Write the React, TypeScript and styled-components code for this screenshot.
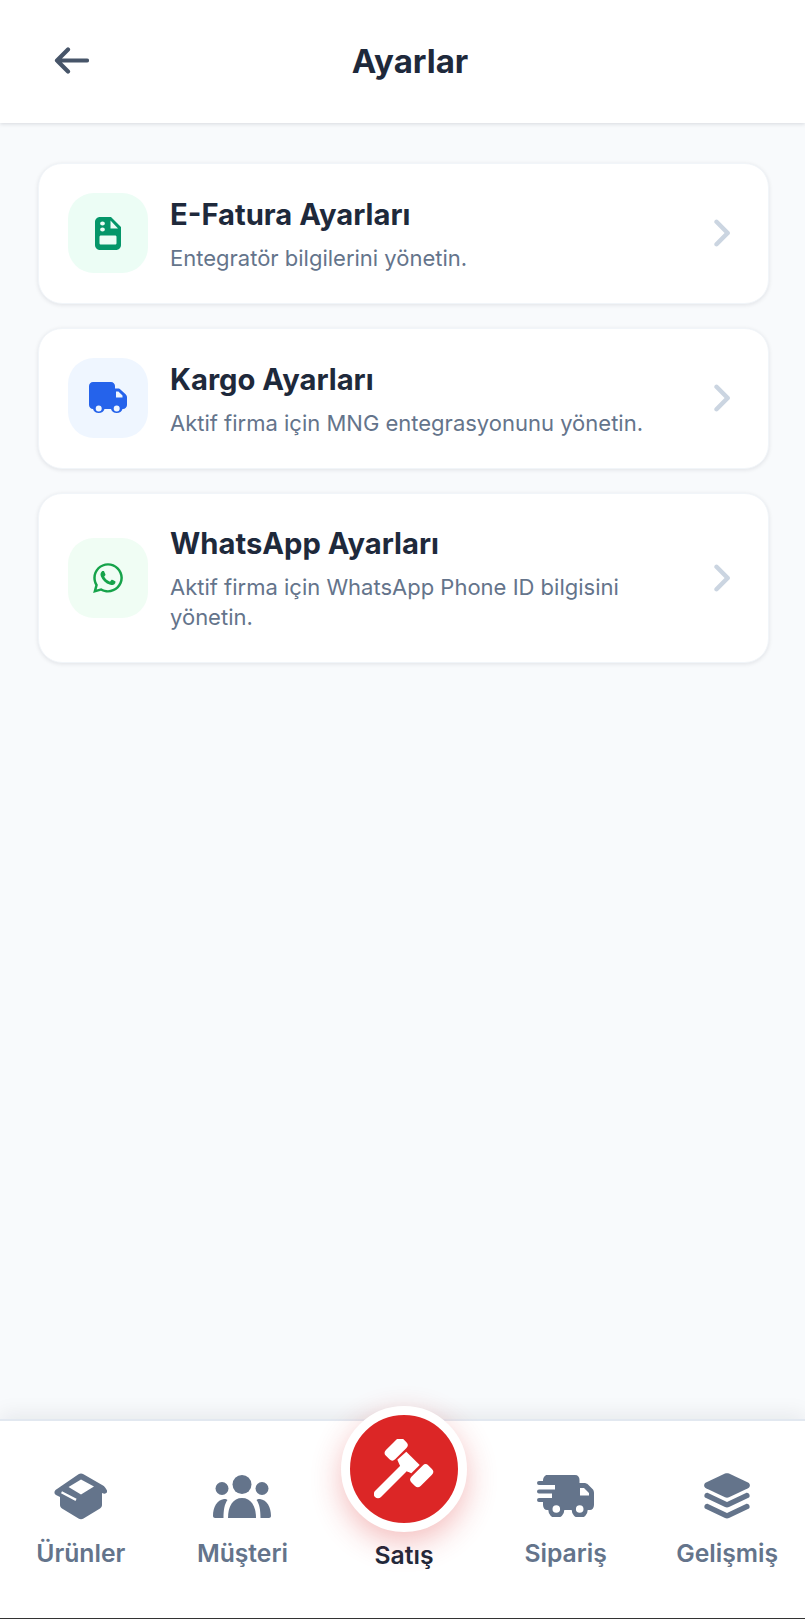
import { ReactNode } from "react";
import styled, { createGlobalStyle } from "styled-components";
import { FaAngleRight, FaWhatsapp } from "react-icons/fa6";

const GlobalStyle = createGlobalStyle`
  html, body {
    margin: 0;
    padding: 0;
    background: #f8fafc;
    font-family: Inter, "Noto Sans", sans-serif;
  }
  * {
    box-sizing: border-box;
  }
`;

const Page = styled.div`
  display: flex;
  flex-direction: column;
  width: 805px;
  height: 1619px;
  background: #f8fafc;
  overflow: hidden;
`;

const Header = styled.header`
  display: grid;
  grid-template-columns: 1fr auto 1fr;
  align-items: center;
  height: 123px;
  padding: 0 39px 2px 54px;
  background: #fff;
  box-shadow: 0 1px 4px rgba(15, 23, 42, 0.14);
  color: #475569;
`;

const Title = styled.h1`
  margin: 0;
  font-size: 33px;
  font-weight: 700;
  color: #1e293b;
`;

const List = styled.main`
  display: flex;
  flex: 1;
  flex-direction: column;
  gap: 24px;
  padding: 40px 36px 0 38px;
`;

const Card = styled.div`
  display: flex;
  align-items: center;
  gap: 22px;
  padding: 29px 29px 30px 29px;
  background: #fff;
  border: 1px solid #f1f5f9;
  border-radius: 24px;
  box-shadow: 0 1px 4px rgba(15, 23, 42, 0.1);
`;

const IconBox = styled.div<{ $bg: string; $fg: string }>`
  display: flex;
  flex: none;
  align-items: center;
  justify-content: center;
  width: 80px;
  height: 80px;
  border-radius: 26px;
  background: ${(props) => props.$bg};
  color: ${(props) => props.$fg};
  font-size: 34px;
`;

const Text = styled.div`
  flex: 1;
  min-width: 0;
  padding: 1px 10px 0 0;
`;

const CardTitle = styled.div`
  font-size: 29.2px;
  line-height: 40px;
  font-weight: 700;
  color: #1e293b;
`;

const CardSub = styled.div`
  margin-top: 8px;
  font-size: 22px;
  line-height: 30px;
  color: #64748b;
`;

const Chevron = styled.div`
  display: flex;
  flex: none;
  color: #cbd5e1;
  font-size: 36px;
`;

const BottomBar = styled.nav`
  display: flex;
  align-items: flex-start;
  height: 200px;
  background: #fff;
  border-top: 2px solid #e2e8f0;
  border-bottom: 1px solid #333;
  box-shadow: 0 -4px 20px rgba(15, 23, 42, 0.08);
`;

const Tab = styled.div<{ $active?: boolean }>`
  display: flex;
  flex: none;
  flex-direction: column;
  align-items: center;
  width: 161.6px;
  padding-top: 51px;
  gap: 18px;
  font-size: 24.7px;
  font-weight: 600;
  color: ${(props) => (props.$active ? "#1e293b" : "#64748b")};
  white-space: nowrap;
`;

const TabIcon = styled.div`
  display: flex;
  height: 48px;
  align-items: center;
`;

const SaleTab = styled(Tab)`
  position: relative;
  padding-top: 119px;
`;

const SaleButton = styled.div`
  position: absolute;
  top: -15px;
  left: 50%;
  display: flex;
  align-items: center;
  justify-content: center;
  width: 126px;
  height: 126px;
  margin-left: -63px;
  border: 9px solid #fff;
  border-radius: 50%;
  background: #dc2626;
  box-shadow: 0 10px 30px rgba(220, 38, 38, 0.3);
`;

// hand drawn, the icon set in the app is not in the packages
const BackIcon = () => (
  <svg width="35" height="27" viewBox="0 0 35 27">
    <path
      d="M3 13.5H33M14 2.500 3 13.500 14 24.500"
      fill="none"
      stroke="currentColor"
      strokeWidth="4.200"
      strokeLinecap="round"
      strokeLinejoin="round"
    />
  </svg>
);

const FileIcon = () => (
  <svg width="26" height="33" viewBox="0 0 26 33">
    <path
      fill="currentColor"
      fillRule="evenodd"
      d="M5 0H16L26 10V28C26 30.8 23.8 33 21 33H5C2.2 33 0 30.8 0 28V5C0 2.2 2.2 0 5 0ZM15.5 3.5V11.5H23ZM7.5 4.5A2.4 2 0 1 0 7.5 8.5 2.4 2 0 1 0 7.5 4.5ZM7.5 10.5A2.4 2 0 1 0 7.5 14.5 2.4 2 0 1 0 7.5 10.5ZM6 18.5C5 18.5 4.5 19 4.5 20V26C4.5 27 5 27.5 6 27.5H20C21 27.5 21.5 27 21.5 26V20C21.5 19 21 18.5 20 18.5Z"
    />
  </svg>
);

const TruckIcon = () => (
  <svg width="38" height="32" viewBox="0 0 38 32">
    <path
      fill="currentColor"
      fillRule="evenodd"
      d="M4 0H22C24.2 0 26 1.8 26 4V6.5H29C30 6.5 31 7 31.7 7.7L36.6 12.3C37.5 13.1 38 14.2 38 15.4V23C38 25.2 36.2 27 34 27H33.5A6 5.5 0 0 1 22 27H15.5A6 5.5 0 0 1 4 27C1.8 27 0 25.2 0 23V4C0 1.8 1.8 0 4 0ZM27 9.5V15.5H33.5V13.6L29.4 9.5ZM9.7 23.5A3 3 0 1 0 9.71 29.5 3 3 0 1 0 9.7 23.5ZM27.7 23.5A3 3 0 1 0 27.71 29.5 3 3 0 1 0 27.7 23.5Z"
    />
  </svg>
);

const BoxIcon = () => (
  <svg width="54" height="47" viewBox="0 0 54 47">
    <path
      fill="currentColor"
      fillRule="evenodd"
      d="M24.5 1.2C26 .2 28 .2 29.5 1.2L49 12.5C50.3 13.2 52 15.5 53 17.5 53.5 19.5 52 21.8 48 20V32C48 33.5 47.2 34.8 46 35.5L29.5 45.5C28 46.4 26 46.4 24.5 45.5L8 35.5C6.8 34.8 6 33.5 6 32V24L2 22C0 21 0 18.5 1.5 17ZM27 6.5 14.5 14 27 21.5 40 13.5ZM8 18.2 7 20.2 21.5 28 22.6 25.8Z"
    />
  </svg>
);

const UsersIcon = () => (
  <svg width="58" height="43" viewBox="0 0 58 43">
    <g fill="currentColor">
      <circle cx="29" cy="9.5" r="9.5" />
      <circle cx="9" cy="13.5" r="6.5" />
      <circle cx="49" cy="13.5" r="6.5" />
      <path d="M15 43C15 31 20 23 29 23S43 31 43 43Z" />
      <path d="M0 41C0 32 4 25 11 24 13 24 14 24.5 14.5 25 11.5 29 10.500 35 10.500 43H2C1 43 0 42 0 41Z" />
      <path d="M58 41C58 32 54 25 47 24 45 24 44 24.5 43.500 25 46.500 29 47.500 35 47.500 43H56C57 43 58 42 58 41Z" />
    </g>
  </svg>
);

const TruckFastIcon = () => (
  <svg width="57" height="42" viewBox="0 0 57 42">
    <path
      fill="currentColor"
      fillRule="evenodd"
      d="M10 0H38C41 0 42.500 2 42.500 5V8H47C48.500 8 50 8.500 51 9.500L55.500 14C56.500 15 57 16.500 57 18V30C57 33 55 35 53 35H50.700A8 8 0 0 1 34.700 35H27.300A8 8 0 0 1 11.300 35H10C8 35 6 33 6 30V27H2A2 2 0 0 1 2 23H15V18.500H2A2 2 0 0 1 2 14.500H18V10H2A2 2 0 0 1 2 6H6C6 2.500 8 0 10 0ZM43 13V20.500H52V18L47 13ZM19.300 30.200A3.800 3.800 0 1 0 19.310 37.800 3.800 3.800 0 1 0 19.300 30.200ZM42.700 30.200A3.800 3.800 0 1 0 42.710 37.800 3.800 3.800 0 1 0 42.700 30.200Z"
    />
  </svg>
);

const LayersIcon = () => (
  <svg width="46" height="46" viewBox="0 0 46 46">
    <g fill="currentColor">
      <path d="M21 .6C22.300 0 23.700 0 25 .6L44 9.600C46.500 10.800 46.500 14 44 15.200L25 24.200C23.700 24.800 22.300 24.800 21 24.200L2 15.200C-.5 14 -.5 10.800 2 9.600Z" />
      <path d="M4 20 23 29 42 20C44 19 47 22 45 24.500L25 34C23.700 34.600 22.300 34.600 21 34L1 24.500C-1 22 2 19 4 20Z" />
      <path d="M4 31 23 40 42 31C44 30 47 33 45 35.500L25 45C23.700 45.600 22.300 45.600 21 45L1 35.500C-1 33 2 30 4 31Z" />
    </g>
  </svg>
);

const GavelIcon = () => (
  <svg width="60" height="60" viewBox="0 0 60 60">
    <g fill="#fff">
      <rect x="10.200" y="3.500" width="24" height="13" rx="4" transform="rotate(-45 22.200 10)" />
      <rect x="35.700" y="30.200" width="24" height="13" rx="4" transform="rotate(-45 47.700 36.700)" />
      <path d="M23.300 20.700 32.300 12.700 45.700 26 37.300 34.300 33 32.300 26 26.700Z" />
      <line x1="4" y1="55" x2="30" y2="29" stroke="#fff" strokeWidth="8.500" strokeLinecap="round" />
    </g>
  </svg>
);

type Setting = {
  title: string;
  sub: string;
  icon: ReactNode;
  bg: string;
  fg: string;
};

const settings: Setting[] = [
  {
    title: "E-Fatura Ayarları",
    sub: "Entegratör bilgilerini yönetin.",
    icon: <FileIcon />,
    bg: "#ecfdf5",
    fg: "#059669",
  },
  {
    title: "Kargo Ayarları",
    sub: "Aktif firma için MNG entegrasyonunu yönetin.",
    icon: <TruckIcon />,
    bg: "#eff6ff",
    fg: "#2563eb",
  },
  {
    title: "WhatsApp Ayarları",
    sub: "Aktif firma için WhatsApp Phone ID bilgisini yönetin.",
    icon: <FaWhatsapp />,
    bg: "#f0fdf4",
    fg: "#16a34a",
  },
];

function App() {
  return (
    <Page>
      <GlobalStyle />
      <Header>
        <BackIcon />
        <Title>Ayarlar</Title>
      </Header>

      <List>
        {settings.map((item) => (
          <Card key={item.title}>
            <IconBox $bg={item.bg} $fg={item.fg}>
              {item.icon}
            </IconBox>
            <Text>
              <CardTitle>{item.title}</CardTitle>
              <CardSub>{item.sub}</CardSub>
            </Text>
            <Chevron>
              <FaAngleRight />
            </Chevron>
          </Card>
        ))}
      </List>

      <BottomBar>
        <Tab>
          <TabIcon>
            <BoxIcon />
          </TabIcon>
          Ürünler
        </Tab>
        <Tab>
          <TabIcon>
            <UsersIcon />
          </TabIcon>
          Müşteri
        </Tab>
        <SaleTab $active>
          <SaleButton>
            <GavelIcon />
          </SaleButton>
          Satış
        </SaleTab>
        <Tab>
          <TabIcon>
            <TruckFastIcon />
          </TabIcon>
          Sipariş
        </Tab>
        <Tab>
          <TabIcon>
            <LayersIcon />
          </TabIcon>
          Gelişmiş
        </Tab>
      </BottomBar>
    </Page>
  );
}

export default App;
